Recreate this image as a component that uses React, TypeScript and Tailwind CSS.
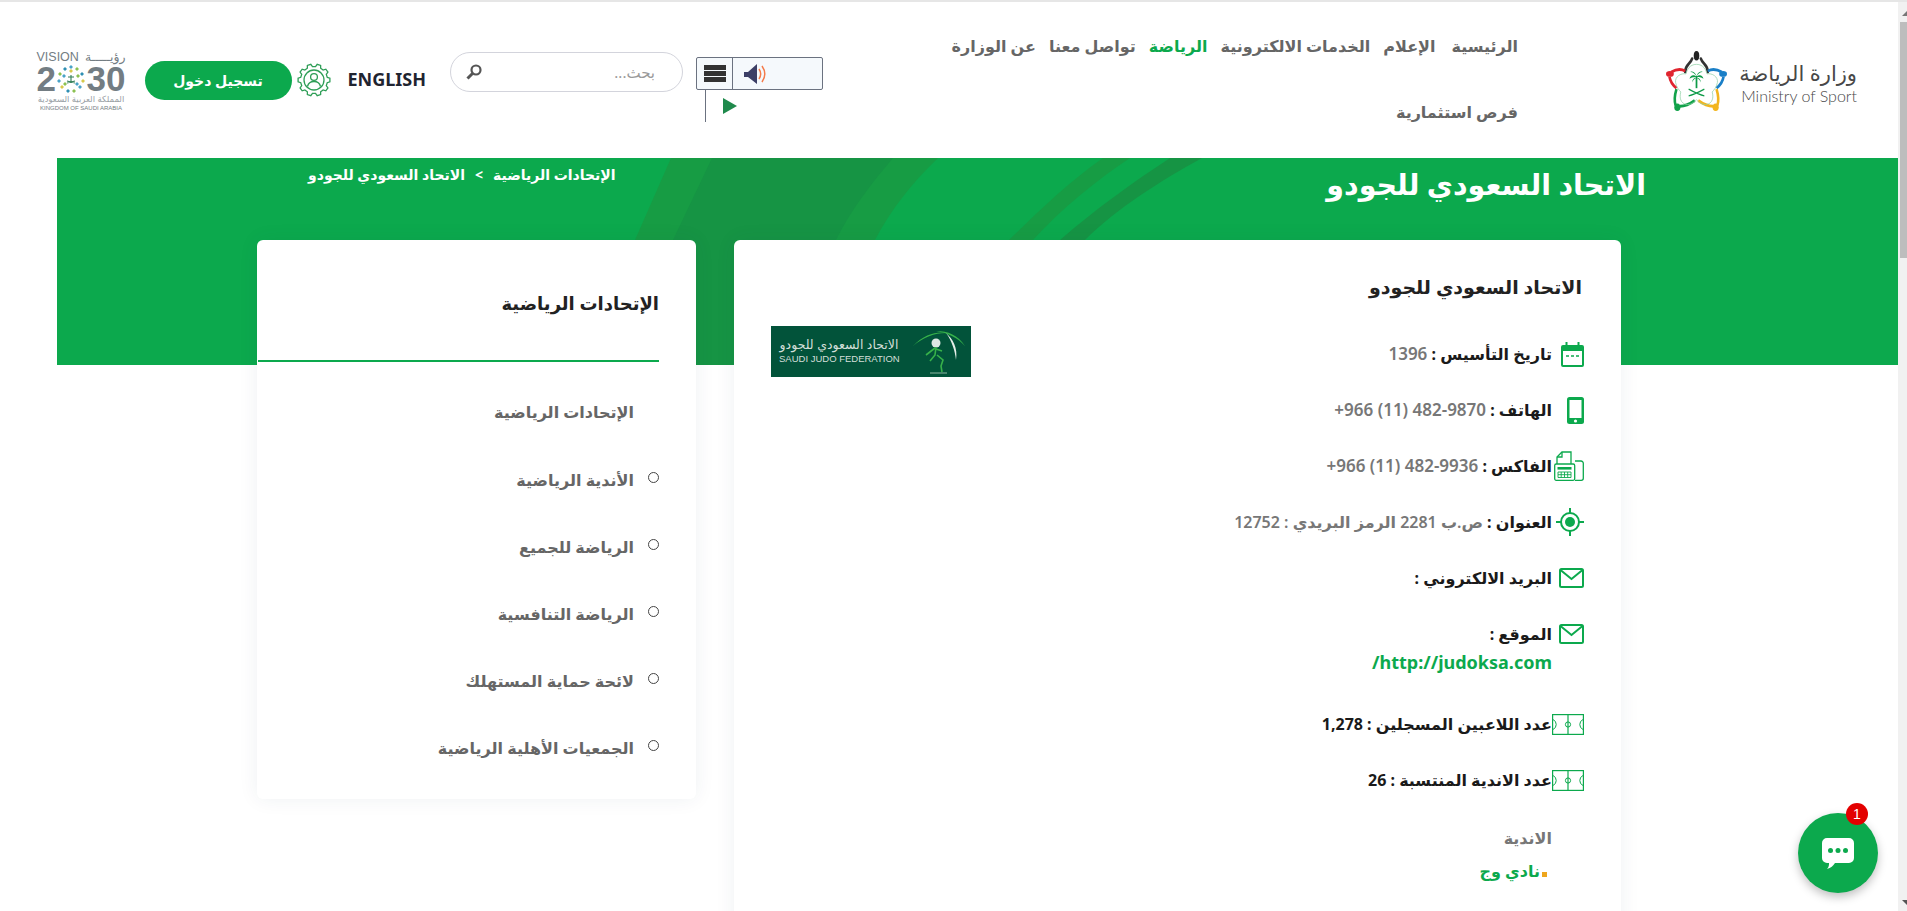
import React from "react";

const gearPath = (() => {
  const n = 10;
  const pts: string[] = [];
  for (let i = 0; i < n; i++) {
    const a = (i / n) * Math.PI * 2;
    const s = (Math.PI * 2) / n;
    const p = (r: number, t: number) => `${(17 + r * Math.cos(t)).toFixed(2)} ${(17 + r * Math.sin(t)).toFixed(2)}`;
    pts.push(`${i === 0 ? "M" : "L"}${p(13.5, a - s * 0.32)}`);
    pts.push(`L${p(16, a - s * 0.18)}`);
    pts.push(`L${p(16, a + s * 0.18)}`);
    pts.push(`L${p(13.5, a + s * 0.32)}`);
  }
  return pts.join(" ") + "Z";
})();

function GearUser() {
  return (
    <svg viewBox="0 0 34 34" className="w-[34px] h-[34px]" fill="none" stroke="#2f9e57" strokeWidth="1.3">
      <path d={gearPath} />
      <circle cx="17" cy="17" r="10" />
      <circle cx="17" cy="14" r="3.4" />
      <path d="M10.500 23.500c.8-3.500 3.400-5 6.500-5s5.700 1.500 6.500 5" />
    </svg>
  );
}
function Calendar() {
  return (
    <svg viewBox="0 0 23 25" className="w-[23px] h-[25px]" fill="none">
      <path d="M1 5a1 1 0 0 1 1-1h19a1 1 0 0 1 1 1v18a1 1 0 0 1-1 1H2a1 1 0 0 1-1-1z" stroke="#0ca94d" strokeWidth="2" />
      <path d="M1 4h21v5H1z" fill="#0ca94d" />
      <path d="M5.500 0v4M17.500 0v4" stroke="#0ca94d" strokeWidth="2" />
      <path d="M5 14h3M10 14h3M15 14h3" stroke="#0ca94d" strokeWidth="1.600" />
    </svg>
  );
}
function Phone() {
  return (
    <svg viewBox="0 0 17 27" className="w-[17px] h-[27px]" fill="none">
      <rect width="17" height="27" rx="2.500" fill="#0ca94d" />
      <rect x="2.500" y="3" width="12" height="18" fill="#fff" />
      <circle cx="8.500" cy="24" r="1.600" fill="#fff" />
    </svg>
  );
}
function Fax() {
  return (
    <svg viewBox="0 0 30 30" className="w-[30px] h-[30px]" fill="none" stroke="#0ca94d" strokeWidth="1.300">
      <path d="M3 13V6l5-5h9v12" />
      <path d="M8 1v5H3" />
      <rect x="0.700" y="13" width="20" height="16.300" rx="1.500" />
      <path d="M21 10h6a2.300 2.300 0 0 1 2.300 2.300v15a2 2 0 0 1-2 2H21" />
      <rect x="3.500" y="16" width="14" height="2.600" fill="#0ca94d" stroke="none" />
      <path d="M4 21h13v5.500H4zM4 23.700h13M7.200 21v5.500M10.500 21v5.500M13.700 21v5.500" strokeWidth="0.900" />
    </svg>
  );
}
function Target() {
  return (
    <svg viewBox="0 0 28 28" className="w-[28px] h-[28px]" fill="none" stroke="#0ca94d">
      <circle cx="14" cy="14" r="9" strokeWidth="2" />
      <circle cx="14" cy="14" r="5" fill="#0ca94d" stroke="none" />
      <path d="M14 0v5M14 23v5M0 14h5M23 14h5" strokeWidth="2" />
    </svg>
  );
}
function Mail() {
  return (
    <svg viewBox="0 0 25 20" className="w-[25px] h-[20px]" fill="none" stroke="#0ca94d" strokeWidth="2">
      <rect x="1" y="1" width="23" height="18" rx="1.500" />
      <path d="M1.500 2l11 9 11-9" />
    </svg>
  );
}
function Pitch() {
  return (
    <svg viewBox="0 0 32 21" className="w-[32px] h-[21px]" fill="none" stroke="#0ca94d" strokeWidth="1">
      <rect x="0.600" y="0.600" width="30.800" height="19.800" strokeWidth="1.200" />
      <path d="M16 0.600v20" strokeWidth="1.200" />
      <circle cx="16" cy="10.500" r="2.600" />
      <path d="M1 5.500a5.500 5.500 0 0 1 0 10M31 5.500a5.500 5.500 0 0 0 0 10" />
    </svg>
  );
}

function MinistryLogo() {
  return (
    <svg viewBox="0 0 70 64" preserveAspectRatio="none" className="w-[61px] h-[61px] shrink-0" fill="none">
      <path d="M22 22C22 14 28 14 30 8" stroke="#333" strokeWidth="3" strokeLinecap="round" />
      <path d="M48 22C48 14 42 14 40 8" stroke="#333" strokeWidth="3" strokeLinecap="round" />
      <ellipse cx="35" cy="5" rx="3.200" ry="5" fill="#222" />
      <path d="M22 21C16 18 10 20 6 22" stroke="#e0252f" strokeWidth="3" />
      <ellipse cx="4.500" cy="24" rx="4.500" ry="3" fill="#e0252f" />
      <path d="M4 27c1 6 4 9 8 12" stroke="#e0252f" strokeWidth="3" />
      <path d="M48 21c6-3 12-1 16 1" stroke="#1a7fc7" strokeWidth="3" />
      <ellipse cx="65.500" cy="24" rx="4.500" ry="3" fill="#1a7fc7" />
      <path d="M66 27c-1 6-4 9-8 12" stroke="#1a7fc7" strokeWidth="3" />
      <path d="M12 40c-2 6-3 11-1 17" stroke="#12a24a" strokeWidth="3" />
      <ellipse cx="13" cy="59" rx="3.500" ry="4" fill="#12a24a" />
      <path d="M16 58c6 0 11-2 17-6" stroke="#12a24a" strokeWidth="3" />
      <path d="M58 40c2 6 3 11 1 17" stroke="#f2b51d" strokeWidth="3" />
      <ellipse cx="57" cy="59" rx="3.500" ry="4" fill="#f2b51d" />
      <path d="M54 58c-6 0-11-2-17-6" stroke="#f2b51d" strokeWidth="3" />
      <path d="M35 14c8 0 11 6 12 10 6-1 13 3 12 9-1 5-4 8-6 10 2 6 0 12-6 13-5 1-9-2-12-5-3 3-7 6-12 5-6-1-8-7-6-13-2-2-5-5-6-10-1-6 6-10 12-9 1-4 4-10 12-10z" stroke="#8fd0a5" strokeWidth="0.800" />
      <path d="M35 26v13" stroke="#0e9b48" strokeWidth="2" />
      <path d="M35 27c-4-3-7-1-8 2 3-2 5-1 8-2zM35 27c4-3 7-1 8 2-3-2-5-1-8-2zM35 26c-2-4-5-5-7-4 3 0 5 2 7 4zM35 26c2-4 5-5 7-4-3 0-5 2-7 4zM35 28c-3 0-5 2-5 5 1-3 3-4 5-5zM35 28c3 0 5 2 5 5-1-3-3-4-5-5z" fill="#0e9b48" />
      <path d="M26 47c6-1 12-4 18-7M44 47c-6-1-12-4-18-7" stroke="#0e9b48" strokeWidth="1.300" />
    </svg>
  );
}

function VisionLogo() {
  const dots = [
    ["#4aa3c7", 0, -12], ["#8cc152", 6, -10], ["#2f8fb3", 11, -5], ["#d8c94a", 12, 2], ["#4aa3c7", 9, 8], ["#8cc152", 3, 12],
    ["#2f8fb3", -3, 12], ["#d8c94a", -9, 8], ["#4aa3c7", -12, 2], ["#8cc152", -11, -5], ["#2f8fb3", -6, -10], ["#8cc152", 7, -3],
    ["#4aa3c7", -7, -3], ["#d8c94a", 0, -8], ["#8cc152", -6, 5], ["#4aa3c7", 6, 5],
  ] as const;
  return (
    <div className="w-[89px] flex flex-col text-[#737d83] font-['Liberation_Sans','DejaVu_Sans',sans-serif]" dir="ltr">
      <div className="flex justify-between items-center leading-[13px] h-[13px] text-[12.500px]">
        <span>VISION</span>
        <span dir="rtl">رؤيـــــة</span>
      </div>
      <div className="flex items-center justify-between h-[30px] leading-[28px] font-bold text-[35px]">
        <span>2</span>
        <svg viewBox="-14 -14 28 28" className="w-[28px] h-[28px] shrink-0">
          {dots.map(([c, x, y], i) => (
            <rect key={i} x={x - 1.4} y={y - 1.4} width="2.800" height="2.800" fill={c} transform={`rotate(45 ${x} ${y})`} />
          ))}
          <path d="M0-4v8M-3 -2h6M-4 4l8 -2M4 4l-8 -2" stroke="#2f7d55" strokeWidth="1.100" />
        </svg>
        <span>30</span>
      </div>
      <div className="text-[8.500px] leading-[10px] text-center whitespace-nowrap text-[#9aa1a6]" dir="rtl">المملكة العربية السعودية</div>
      <div className="text-[6px] leading-[8px] text-center whitespace-nowrap">KINGDOM OF SAUDI ARABIA</div>
    </div>
  );
}

function SpeechWidget() {
  return (
    <div className="w-[127px] shrink-0 mt-[55px]" dir="ltr">
      <div className="h-[33px] flex border border-[#6b7280] rounded-[2px] bg-[#f5f9fc]">
        <div className="w-[36px] border-r border-[#6b7280] flex flex-col items-center justify-center gap-[1px]">
          <span className="w-[22px] h-[5px] bg-[#333]" />
          <span className="w-[22px] h-[5px] bg-[#333]" />
          <span className="w-[22px] h-[5px] bg-[#333]" />
        </div>
        <div className="pl-[11px] flex items-center">
          <svg viewBox="0 0 22 20" className="w-[22px] h-[20px]" fill="none">
            <path d="M0 8h4l9-8v20l-9-7H0z" fill="#3c3f66" />
            <path d="M15 5c2 3 2 7 0 10" stroke="#f47b4a" strokeWidth="1.500" />
            <path d="M18 2c3.500 5 3.500 11 0 16" stroke="#f47b4a" strokeWidth="1.500" />
          </svg>
        </div>
      </div>
      <div className="flex items-start">
        <span className="ml-[9px] w-[1px] h-[32px] bg-[#6b7280]" />
        <span className="ml-[17px] mt-[8px] w-0 h-0 border-y-[8px] border-y-transparent border-l-[14px] border-l-[#1f8a4c]" />
      </div>
    </div>
  );
}

function Header() {
  const items = [
    { t: "الرئيسية", c: "text-[#666]", cls: "ml-[16px]" },
    { t: "الإعلام", c: "text-[#666]", cls: "ml-[13px]" },
    { t: "الخدمات الالكترونية", c: "text-[#666]", cls: "ml-[13px]" },
    { t: "الرياضة", c: "text-[#0ca94d]", cls: "ml-[13px]" },
    { t: "تواصل معنا", c: "text-[#666]", cls: "ml-[13px]" },
    { t: "عن الوزارة", c: "text-[#666]", cls: "" },
  ];
  return (
    <header className="h-[158px] border-t-2 border-[#e6e6e6] flex items-start pr-[41px]">
      <div className="w-[191px] shrink-0 mt-[49px] flex items-center gap-[13px]" dir="ltr">
        <MinistryLogo />
        <div className="w-[117px] flex flex-col items-end text-[#484848] font-['Lato','DejaVu_Sans',sans-serif]">
          <span className="text-[21px] leading-[28px] whitespace-nowrap" dir="rtl">وزارة الرياضة</span>
          <span className="text-[16px] leading-[18px] font-light whitespace-nowrap">Ministry of Sport</span>
        </div>
      </div>
      <nav className="w-[600px] mr-[148px] shrink-0 mt-[11px]">
        <ul className="flex flex-wrap text-[16px] font-semibold leading-[66px]">
          {items.map((it, i) => (
            <li key={i} className={`${it.c} ${it.cls}`}>{it.t}</li>
          ))}
          <li className="basis-full text-[#666]">فرص استثمارية</li>
        </ul>
      </nav>
      <div className="w-[95px] shrink-0" />
      <SpeechWidget />
      <div className="mr-[13px] w-[233px] h-[40px] mt-[50px] shrink-0 rounded-full border border-[#d3d4dc] flex items-center justify-between pr-[27px] pl-[15px] text-[15px] text-[#9a9a9a]">
        <span>بحث...</span>
        <svg viewBox="0 0 16 16" className="w-[16px] h-[16px]" fill="none" stroke="#555">
          <circle cx="10" cy="6" r="4.500" strokeWidth="2.200" />
          <path d="M6.500 9.500L1.500 14.500" strokeWidth="3" />
        </svg>
      </div>
      <span className="mr-[24px] mt-[65px] text-[18px] leading-[24px] font-bold text-[#1f2430] shrink-0" dir="ltr">ENGLISH</span>
      <div className="mr-[17px] mt-[61px] shrink-0"><GearUser /></div>
      <div className="mr-[5px] mt-[59px] w-[147px] h-[39px] shrink-0 rounded-full bg-[#0ca94d] text-white text-[14px] font-bold flex items-center justify-center">تسجيل دخول</div>
      <div className="mr-[19px] mt-[49px] shrink-0"><VisionLogo /></div>
    </header>
  );
}

function Band() {
  return (
    <section className="relative h-[207px] ml-[57px] bg-[#0ca94d] overflow-hidden">
      <svg viewBox="0 0 1841 207" className="absolute inset-0 w-full h-full" preserveAspectRatio="none">
        <path d="M614 0L578 82C560 125 545 165 525 207H800C810 170 790 140 818 82C835 50 855 25 881 0Z" fill="#179c44" />
        <path d="M655 0L616 82C600 125 585 165 570 207H740C745 170 760 130 779 82C795 50 815 25 836 0Z" fill="#169444" />
        <path d="M1046 0C1010 25 980 55 952 82C925 110 895 145 870 207H900C920 150 950 115 976 82C1005 50 1040 22 1073 0Z" fill="#179c44" />
        <path d="M1113 0C1075 25 1040 50 1003 82C970 115 945 150 925 207H955C970 150 995 115 1028 82C1060 50 1105 22 1145 0Z" fill="#169444" />
      </svg>
      <div className="relative flex justify-between items-start">
        <h1 className="mr-[252px] mt-[6px] text-[28.500px] leading-[40px] font-bold text-white">الاتحاد السعودي للجودو</h1>
        <div className="ml-[251px] mt-[5px] flex gap-[10px] text-[14px] leading-[24px] font-bold text-white">
          <span>الإتحادات الرياضية</span>
          <span>&gt;</span>
          <span>الاتحاد السعودي للجودو</span>
        </div>
      </div>
    </section>
  );
}

function Row({ icon, children, h = "h-[56px]" }: { icon: React.ReactNode; children: React.ReactNode; h?: string }) {
  return (
    <div className={`${h} flex items-center`}>
      <div className="w-[32px] shrink-0 flex justify-start">{icon}</div>
      <div className="text-[16px] font-bold text-[#1a1a1a] whitespace-nowrap">{children}</div>
    </div>
  );
}

const Val = ({ children, dir, small }: { children: React.ReactNode; dir?: "ltr" | "rtl"; small?: boolean }) => (
  <span dir={dir} className={`${small ? "text-[16px]" : "text-[17px]"} font-semibold text-[#777]`}>{children}</span>
);

function MainCard() {
  return (
    <article className="w-[887px] h-[700px] shrink-0 bg-white rounded-[6px] shadow-[0_0_20px_rgba(30,60,90,0.07)] pr-[37px] pt-[32px]">
      <h2 className="text-[19px] leading-[30px] font-semibold text-[#222] mr-[2px]">الاتحاد السعودي للجودو</h2>
      <div className="flex justify-between items-start mt-[24px]">
        <div>
          <Row icon={<Calendar />}>تاريخ التأسيس : <Val>1396</Val></Row>
          <Row icon={<Phone />}>الهاتف : <Val dir="ltr">+966 (11) 482-9870</Val></Row>
          <Row icon={<Fax />}>الفاكس : <Val dir="ltr">+966 (11) 482-9936</Val></Row>
          <Row icon={<Target />}>العنوان : <Val small>ص.ب 2281 الرمز البريدي : 12752</Val></Row>
          <Row icon={<Mail />}>البريد الالكتروني :</Row>
          <div className="h-[90px]">
            <Row icon={<Mail />}>الموقع :</Row>
            <div className="mr-[32px] -mt-[14px] text-[18px] leading-[28px] font-bold text-[#0ca94d]">http://judoksa.com/</div>
          </div>
          <Row icon={<Pitch />}>عدد اللاعبين المسجلين : 1,278</Row>
          <Row icon={<Pitch />}>عدد الاندية المنتسبة : 26</Row>
          <div className="mr-[32px] mt-[16px] text-[16px] leading-[28px] font-semibold text-[#777]">الاندية</div>
          <div className="mr-[37px] mt-[5px] flex items-end gap-[2px] text-[16px] leading-[28px] font-semibold text-[#0ca94d]">
            <span className="w-[5px] h-[5px] bg-[#eea61d] mb-[8px]" />
            <span>نادي وج</span>
          </div>
        </div>
        <div className="ml-[37px] w-[200px] h-[51px] bg-[#02533a] flex items-center justify-between pl-[8px] pr-[5px] overflow-hidden" dir="ltr">
          <div className="w-[120px] flex flex-col text-[#d3dfd9] font-['Liberation_Sans','DejaVu_Sans',sans-serif] leading-none">
            <span className="text-[12.500px] leading-[15px] text-center whitespace-nowrap" dir="rtl">الاتحاد السعودي للجودو</span>
            <span className="text-[9.500px] leading-[12px] whitespace-nowrap">SAUDI JUDO FEDERATION</span>
          </div>
          <svg viewBox="0 0 54 46" className="w-[54px] h-[46px] shrink-0" fill="none">
            <path d="M1 17C12 5 26 2 34 4 22 4 12 8 1 17z" fill="#37b24a" />
            <path d="M53 17C46 6 36 2 24 2c12 2 22 7 29 15z" fill="#37b24a" />
            <path d="M34 4c7 6 12 15 10 27-1-9-4-19-10-27z" fill="#e6eee9" />
            <circle cx="24" cy="14" r="4.500" fill="#dfe8e3" />
            <path d="M24 18l-1 8-5 6M24 20l6 2M25 26l6 5-2 6 1 6M14 26l9-7" stroke="#37b24a" strokeWidth="1.600" />
            <path d="M18 44h17" stroke="#8fb8a2" strokeWidth="1" />
          </svg>
        </div>
      </div>
    </article>
  );
}

function SideCard() {
  const links = ["الأندية الرياضية", "الرياضة للجميع", "الرياضة التنافسية", "لائحة حماية المستهلك", "الجمعيات الأهلية الرياضية"];
  return (
    <aside className="w-[439px] h-[559px] shrink-0 bg-white rounded-[6px] shadow-[0_0_20px_rgba(30,60,90,0.07)] pr-[37px]">
      <h2 className="pt-[48px] text-[18px] leading-[30px] font-bold text-[#222]">الإتحادات الرياضية</h2>
      <div className="mt-[42px] h-[2px] w-[401px] bg-[#0ca94d]" />
      <ul className="pt-[16px] text-[16px] font-semibold text-[#666]">
        <li className="h-[68px] flex items-center pr-[25px]">الإتحادات الرياضية</li>
        {links.map((t, i) => (
          <li key={i} className="h-[67px] flex items-center gap-[14px] first:h-[68px]">
            <span className="w-[11px] h-[11px] rounded-full border border-[#444] shrink-0 -mt-[4px]" />
            <span>{t}</span>
          </li>
        ))}
      </ul>
    </aside>
  );
}

function ChatButton() {
  return (
    <div className="absolute left-[1798px] top-[813px] w-[80px] h-[80px] rounded-full bg-[#0ca94d] shadow-[0_4px_10px_rgba(0,0,0,0.25)] flex items-center justify-center" dir="ltr">
      <svg viewBox="0 0 32 31" className="w-[32px] h-[31px]">
        <path d="M5 0h22a5 5 0 0 1 5 5v15a5 5 0 0 1-5 5H13c-2 3-4 5-8 6 2-2 2-4 2-6H5a5 5 0 0 1-5-5V5a5 5 0 0 1 5-5z" fill="#fff" />
        <circle cx="8.500" cy="12.500" r="2.500" fill="#0ca94d" />
        <circle cx="16" cy="12.500" r="2.500" fill="#0ca94d" />
        <circle cx="23.500" cy="12.500" r="2.500" fill="#0ca94d" />
      </svg>
      <span className="absolute left-[48px] -top-[10px] w-[22px] h-[22px] rounded-full bg-[#e30000] text-white text-[14px] leading-[22px] text-center font-['Liberation_Sans']">1</span>
    </div>
  );
}

function Scrollbar() {
  return (
    <div className="w-[9px] h-[911px] shrink-0 bg-[#f1f1f1] border-t-2 border-[#e6e6e6] relative flex justify-end">
      <span className="absolute right-0 top-[9px] w-0 h-0 border-b-[5px] border-b-[#777] border-l-[5px] border-l-transparent" />
      <span className="mt-[20px] w-[7px] h-[236px] bg-[#bdbdbd]" />
      <span className="absolute right-0 bottom-[6px] w-0 h-0 border-t-[5px] border-t-[#555] border-l-[5px] border-l-transparent" />
    </div>
  );
}

export default function App() {
  return (
    <div className="relative h-[911px] overflow-hidden flex bg-white font-['Noto_Sans','DejaVu_Sans',sans-serif]">
      <div className="w-[1898px] shrink-0" dir="rtl">
        <Header />
        <Band />
        <div className="flex gap-[38px] pr-[277px] -mt-[125px] relative">
          <MainCard />
          <SideCard />
        </div>
      </div>
      <Scrollbar />
      <ChatButton />
    </div>
  );
}
